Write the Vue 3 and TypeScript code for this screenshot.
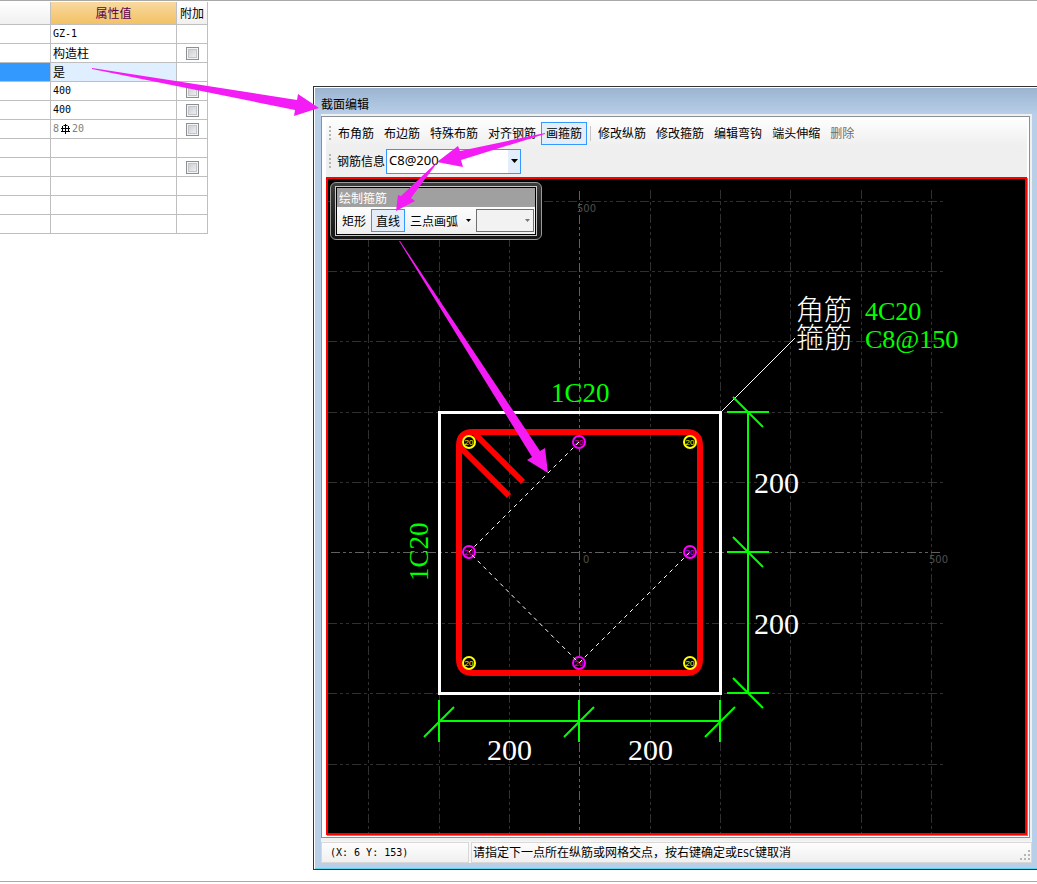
<script setup lang="ts">
import { ref } from 'vue'

interface PropertyRow {
  value: string
  kind?: 'rebar' | 'cjk'
  extra: boolean
  selected?: boolean
}

const rows: PropertyRow[] = [
  { value: 'GZ-1', extra: false },
  { value: '构造柱', kind: 'cjk', extra: true },
  { value: '是', kind: 'cjk', extra: false, selected: true },
  { value: '400', extra: true },
  { value: '400', extra: true },
  { value: '', kind: 'rebar', extra: true },
  { value: '', extra: false },
  { value: '', extra: true },
  { value: '', extra: false },
  { value: '', extra: false },
  { value: '', extra: false },
]

const drawTools = ['布角筋', '布边筋', '特殊布筋', '对齐钢筋', '画箍筋']
const editTools = ['修改纵筋', '修改箍筋', '编辑弯钩', '端头伸缩']
const activeTool = ref('画箍筋')
const shape = ref('直线')
const rebar = ref('C8@200')

const gridX = [368, 439, 509, 650, 720, 790, 861, 931]
const gridY = [201, 271, 341, 412, 482, 623, 693, 764]

const cornerBars = [[469, 442], [690, 442], [469, 663], [690, 663]]
const sideBars = [[579, 442], [469, 552], [690, 552], [579, 663]]
const dimX = [439, 579, 720]
const dimY = [412, 552, 693]
</script>

<template>
  <main class="page">
    <table class="props">
      <colgroup><col class="c-name" /><col class="c-value" /><col class="c-extra" /></colgroup>
      <thead>
        <tr><th></th><th class="hot">属性值</th><th>附加</th></tr>
      </thead>
      <tbody>
        <tr v-for="(row, i) in rows" :key="i" :class="{ selected: row.selected }">
          <td></td>
          <td :class="{ cjk: row.kind === 'cjk' }">
            <span v-if="row.kind === 'rebar'" class="rebar">
              <span>8</span>
              <svg width="9" height="10" viewBox="0 0 9 10" fill="none" stroke="#000">
                <path d="M4.500 0v10M0 7.500h9M0 4.500h9" />
                <path d="M2.500 1.500h4M1.500 2v5M7.500 2v5" />
              </svg>
              <span>20</span>
            </span>
            <template v-else>{{ row.value }}</template>
          </td>
          <td class="tick"><input v-if="row.extra" type="checkbox" :aria-label="'附加 ' + (i + 1)" /></td>
        </tr>
      </tbody>
    </table>

    <section class="dialog" aria-labelledby="dlg-title">
      <h1 id="dlg-title" class="title">截面编辑</h1>
      <div class="client">
        <div class="toolbars">
          <div class="bar">
            <i class="grip"></i>
            <button v-for="t in drawTools" :key="t" type="button" :class="{ on: activeTool === t }" @click="activeTool = t">{{ t }}</button>
            <i class="sep"></i>
            <button v-for="t in editTools" :key="t" type="button" :class="{ on: activeTool === t }" @click="activeTool = t">{{ t }}</button>
            <button type="button" disabled>删除</button>
          </div>
          <div class="bar second">
            <i class="grip"></i>
            <label for="rebar">钢筋信息</label>
            <span class="combo">
              <select id="rebar" v-model="rebar"><option>C8@200</option></select>
              <i class="drop"><svg width="7" height="4" viewBox="0 0 7 4"><path d="M0 0h7L3.500 4z" /></svg></i>
            </span>
          </div>
        </div>

        <div class="canvas">
          <svg class="drawing" viewBox="328 179 697 654" role="img" aria-label="截面">
            <g class="grid">
              <path v-for="x in gridX" :key="'x' + x" :d="`M${x}.5 190V833`" />
              <path v-for="y in gridY" :key="'y' + y" :d="`M328 ${y}.5H943`" />
            </g>
            <g class="grid axis">
              <path d="M579.5 191V833" />
              <path d="M331 552.5H943" />
            </g>
            <g class="coord">
              <text x="577" y="212">500</text>
              <text x="583" y="563">0</text>
              <text x="929" y="563">500</text>
            </g>
            <rect class="outline" x="439.5" y="412.5" width="281" height="281" />
            <path class="stirrup" d="M473 432H686Q700 432 700 446V659Q700 673 686 673H473Q459 673 459 659V446Q459 432 473 432" />
            <path class="stirrup hook" d="M475 434L523 482M460 447L509 496" />
            <g v-for="b in cornerBars" :key="b.join()" class="node corner">
              <circle :cx="b[0]" :cy="b[1]" r="6" />
              <text :x="b[0]" :y="b[1] + 3">20</text>
            </g>
            <g v-for="b in sideBars" :key="b.join()" class="node side">
              <circle :cx="b[0]" :cy="b[1]" r="6" />
              <text :x="b[0]" :y="b[1] + 3">20</text>
            </g>
            <path class="path" d="M579 442L469 552L579 663L690 552" />
            <path class="leader" d="M721 412L795 338" />
            <g class="dim">
              <path d="M439 721H720M748 412V693" />
              <path v-for="x in dimX" :key="'dx' + x" :d="`M${x} 700V742M${x - 15} 737L${x + 15} 707`" />
              <path v-for="y in dimY" :key="'dy' + y" :d="`M727 ${y}H769M733 ${y - 15}L763 ${y + 15}`" />
            </g>
            <g class="num">
              <text x="487" y="760">200</text>
              <text x="628" y="760">200</text>
              <text x="754" y="493">200</text>
              <text x="754" y="634">200</text>
            </g>
            <g class="num green">
              <text x="551" y="402">1C20</text>
              <text transform="translate(428 581) rotate(-90)">1C20</text>
              <text class="tag" x="865" y="320">4C20</text>
              <text class="tag" x="865" y="348">C8@150</text>
            </g>
            <text class="han"><tspan x="796" y="320">角筋</tspan><tspan x="796" y="348">箍筋</tspan></text>
          </svg>

          <div class="palette">
            <div class="inner">
              <div class="ptitle">绘制箍筋</div>
              <div class="ptools">
                <button type="button" :class="{ on: shape === '矩形' }" @click="shape = '矩形'">矩形</button>
                <button type="button" :class="{ on: shape === '直线' }" @click="shape = '直线'">直线</button>
                <button type="button" class="arc" :class="{ on: shape === '弧' }" @click="shape = '弧'">
                  三点画弧<svg width="5" height="3" viewBox="0 0 5 3"><path d="M0 0h5L2.500 3z" /></svg>
                </button>
                <span class="combo small">
                  <select aria-label="画弧方式" disabled></select>
                  <i class="drop"><svg width="5" height="3" viewBox="0 0 5 3"><path d="M0 0h5L2.500 3z" /></svg></i>
                </span>
              </div>
            </div>
          </div>
        </div>
      </div>
      <footer class="status">
        <span class="pane pos">(X: 6 Y: 153)</span>
        <span class="pane msg">请指定下一点所在纵筋或网格交点，按右键确定或<span class="key">ESC</span>键取消
          <svg class="size" width="11" height="11" viewBox="0 0 11 11" fill="#b5b5b5">
            <path d="M9 0h2v2h-2zM9 4h2v2h-2zM9 8h2v2h-2zM5 4h2v2h-2zM5 8h2v2h-2zM1 8h2v2h-2z" />
          </svg>
        </span>
      </footer>
    </section>

    <svg class="arrows" width="1037" height="884" viewBox="0 0 1037 884" fill="#f41cf4" aria-hidden="true">
      <path d="M92 68L297 100L298 94L319 108L294 116L295 110L92 69Z" />
      <path d="M545 133L460 151L458 146L437 162L463 167L461 160L545 134Z" />
      <path d="M436 163L401 196L398 195L396 211L415 201L411 198L437 163Z" />
      <path d="M399 241L532 457L527 460L548 473L545 448L540 451L400 241Z" />
    </svg>
  </main>
</template>

<style>
body {
  margin: 0;
  background: #fff;
}
</style>

<style scoped>
.page {
  position: relative;
  display: flex;
  align-items: flex-start;
  box-sizing: border-box;
  padding-bottom: 11px;
  border-top: 1px solid #a9a9a9;
  border-bottom: 1px solid #a9a9a9;
  overflow: hidden;
  color: #000;
  font: 12px/16px "Liberation Sans", "Noto Sans CJK SC", sans-serif;
}
button,
select,
input {
  box-sizing: border-box;
  margin: 0;
  font: inherit;
  color: inherit;
}

/* property table */
.props {
  flex: none;
  width: 208px;
  margin-top: 1px;
  table-layout: fixed;
  border-collapse: separate;
  border-spacing: 0;
}
.c-name { width: 51px; }
.c-value { width: 126px; }
.c-extra { width: 31px; }
.props th,
.props td {
  box-sizing: border-box;
  height: 19px;
  padding: 0 0 0 2px;
  border: solid #bfbfbf;
  border-width: 0 1px 1px 0;
  font: 10px/18px "DejaVu Sans Mono", "Noto Sans CJK SC", monospace;
  text-align: left;
  white-space: nowrap;
}
.props th {
  height: 23px;
  padding: 0;
  background: linear-gradient(#fff, #f0f0f0);
  font: 12px/22px "Noto Sans CJK SC", sans-serif;
  text-align: center;
}
.props th.hot {
  background: linear-gradient(#f9d9a0, #f2c264);
  color: #5a0050;
}
.props td.cjk {
  font: 12px/18px "Noto Sans CJK SC", sans-serif;
}
.selected td:first-child { background: #3399ff; }
.selected td:nth-child(2) { background: #dfefff; }
.rebar {
  display: flex;
  align-items: center;
  gap: 2px;
  color: #808080;
}
.props td.tick {
  padding: 0;
  text-align: center;
}
.tick input {
  display: block;
  appearance: none;
  width: 13px;
  height: 13px;
  margin: 0 auto;
  border: 1px solid #8e8f8f;
  background: linear-gradient(135deg, #c4c8ce, #f6f6f6);
  box-shadow: inset 0 0 0 1px #f4f4f4, inset 0 0 0 2px #c2c5c9;
}

/* dialog window */
.dialog {
  flex: 1;
  min-width: 0;
  margin: 85px 0 0 105px;
  padding: 0 5px 6px 6px;
  border: 1px solid #333;
  border-right: 0;
  border-bottom-color: #2a3a40;
  background: linear-gradient(#9ab3cf, #b9cfe8 28px);
  box-shadow: inset 1px 1px #fff, inset 0 -1px #5fd3f0;
}
.title {
  margin: 0;
  height: 27px;
  padding-left: 1px;
  font: 12px/33px "Noto Sans CJK SC", sans-serif;
}
.client {
  margin: 2px 2px 0 1px;
  padding: 3px 2px 2px 4px;
  border: 1px solid #8b8f98;
  background: #fff;
  box-shadow: 0 -2px #f0f0f0, 2px -2px #f0f0f0, 2px 3px #f0f0f0, 0 3px #f0f0f0;
}
.toolbars {
  display: flex;
  flex-direction: column;
  height: 57px;
  background: linear-gradient(#fdfdfd, #efefef 26px);
}
.bar {
  display: flex;
  align-items: center;
  height: 26px;
  padding: 0 0 0 3px;
  white-space: nowrap;
}
.bar.second { padding-top: 2px; }
.grip {
  flex: none;
  width: 2px;
  height: 14px;
  margin-right: 2px;
  background: repeating-linear-gradient(#b4b4b4 0 2px, transparent 2px 4px);
}
.bar button,
.ptools button {
  height: 23px;
  padding: 0 4px;
  border: 1px solid transparent;
  background: none;
  font: 12px/20px "Noto Sans CJK SC", sans-serif;
  white-space: nowrap;
}
.bar button.on,
.ptools button.on {
  border-color: #3399ff;
  background: #e4eefa;
}
.bar button:disabled { color: #6d6d6d; }
.sep {
  width: 1px;
  height: 15px;
  margin: 0 2px 0 3px;
  background: #c8c8c8;
}
.bar label {
  margin: 0 1px 0 4px;
  font: 12px/18px "Noto Sans CJK SC", sans-serif;
}
.combo {
  position: relative;
  display: block;
  width: 135px;
  height: 25px;
}
.combo select {
  display: block;
  appearance: none;
  width: 100%;
  height: 100%;
  padding: 0 14px 2px 2px;
  border: 1px solid #3399ff;
  border-radius: 0;
  background: #fff;
  font: 13px/20px "Noto Sans", sans-serif;
}
.drop {
  position: absolute;
  top: 1px;
  right: 1px;
  bottom: 1px;
  display: grid;
  place-items: center;
  width: 12px;
  background: #e4eefa;
  pointer-events: none;
}

/* drawing area */
.canvas {
  position: relative;
  border: 2px solid #f00;
  background: #000;
  box-shadow: 1px 1px #8b8f98;
}
.drawing {
  display: block;
  width: 100%;
  height: auto;
}
.grid path {
  fill: none;
  stroke: #303030;
  stroke-dasharray: 9 3 3 3 3 3;
}
.grid.axis path { stroke: #606060; }
.coord text {
  fill: #505050;
  font: 10px "DejaVu Sans", sans-serif;
}
.outline {
  fill: none;
  stroke: #fff;
  stroke-width: 3;
}
.stirrup {
  fill: none;
  stroke: #f00;
  stroke-width: 6;
}
.stirrup.hook { stroke-width: 6; }
.node circle {
  fill: #000;
  stroke-width: 2;
}
.node text {
  font: 8px "Liberation Sans", sans-serif;
  text-anchor: middle;
}
.corner circle { stroke: #ff0; }
.corner text { fill: #ff0; }
.side circle { stroke: #f0f; }
.side text { fill: #f0f; }
.path {
  fill: none;
  stroke: #fff;
  stroke-dasharray: 4 4;
}
.leader { stroke: #fff; }
.dim path {
  fill: none;
  stroke: #0f0;
  stroke-width: 2;
}
.num text {
  fill: #fff;
  font: 30px "Liberation Serif", serif;
}
.num.green text {
  fill: #0f0;
  font-size: 27px;
}
.num.green .tag { font-size: 26px; }
.han {
  fill: #fff;
  font: 300 28px "Noto Sans CJK SC", sans-serif;
}

/* floating palette */
.palette {
  position: absolute;
  top: 3px;
  left: 2px;
  box-sizing: border-box;
  width: 212px;
  padding: 3px 4px;
  border: 1px solid #9a9a9a;
  border-radius: 6px;
  background: linear-gradient(#3c3c3c, #151515);
}
.inner {
  padding: 1px;
  border: 1px solid #c8c8c8;
  background: #000;
}
.ptitle {
  height: 19px;
  padding-left: 2px;
  background: #a0a0a0;
  color: #fff;
  font: 12px/20px "Noto Sans CJK SC", sans-serif;
}
.ptools {
  display: flex;
  align-items: center;
  height: 27px;
  background: linear-gradient(#fdfdfd, #efefef);
}
.ptools .arc {
  display: flex;
  align-items: center;
  gap: 8px;
  padding-right: 4px;
}
.combo.small {
  flex: 1;
  width: auto;
  height: 23px;
  margin-right: 1px;
}
.combo.small select {
  border-color: #707070;
  background: #f2f2f2;
  opacity: 1;
}
.combo.small .drop {
  background: none;
  fill: #777;
}

/* status bar */
.status {
  display: flex;
  gap: 2px;
  margin: 3px 0 0 1px;
  padding-top: 1px;
  background: #f6f6f6;
}
.pane {
  box-sizing: border-box;
  height: 21px;
  border: 1px solid #d8d8d8;
  background: linear-gradient(#fdfdfd, #f0f0f0);
  white-space: nowrap;
}
.pos {
  width: 148px;
  padding-left: 8px;
  font: 10px/19px "DejaVu Sans Mono", monospace;
}
.msg {
  position: relative;
  flex: 1;
  padding-left: 1px;
  overflow: hidden;
  font: 12px/18px "Noto Sans CJK SC", sans-serif;
}
.key {
  font: 10px/18px "DejaVu Sans Mono", monospace;
}
.size {
  position: absolute;
  right: 1px;
  bottom: 1px;
}

/* callout arrows */
.arrows {
  position: absolute;
  top: -1px;
  left: 0;
  pointer-events: none;
}
</style>
